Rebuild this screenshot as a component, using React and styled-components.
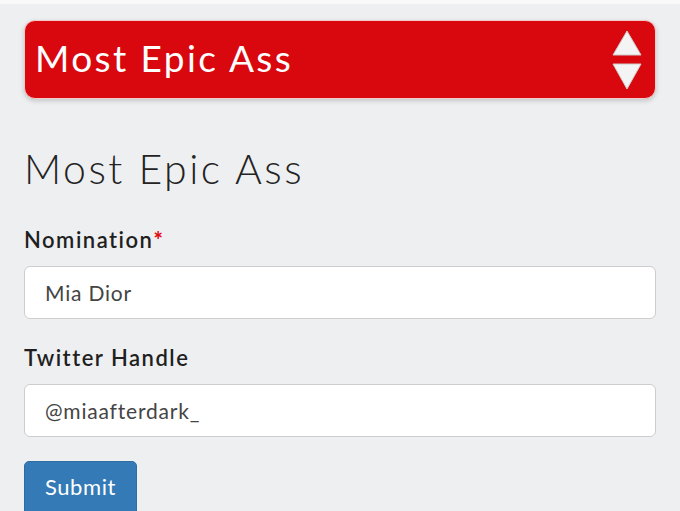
import React from 'react'
import styled, { createGlobalStyle } from 'styled-components'

const Global = createGlobalStyle`
    body {
        margin: 0;
        background: #eeeff1;
        font-family: Lato, "Noto Sans", sans-serif;
    }
`

function App() {
    return (
        <Page>
            <Global />
            <TopStrip />
            <Content>
                <Select>
                    <span>Most Epic Ass</span>
                    <Arrows viewBox="0 0 32 62" width="32" height="62">
                        <path d="M16 2 L30 26 L2 26 Z" fill="#f4f4f4" stroke="#ccc" strokeWidth="1" strokeLinejoin="round" />
                        <path d="M2 35 L30 35 L16 60 Z" fill="#f4f4f4" stroke="#ccc" strokeWidth="1" strokeLinejoin="round" />
                    </Arrows>
                </Select>
                <Title>Most Epic Ass</Title>
                <Field>
                    <Label>Nomination<Req>*</Req></Label>
                    <Input defaultValue="Mia Dior" />
                </Field>
                <Field>
                    <Label>Twitter Handle</Label>
                    <Input defaultValue="@miaafterdark_" />
                </Field>
                <Button>Submit</Button>
            </Content>
        </Page>
    )
}

export default App

const Page = styled.div`
    width: 680px;
    height: 511px;
    overflow: hidden;
`

const TopStrip = styled.div`
    height: 4px;
    background: #f9f9fa;
`

const Content = styled.div`
    padding: 16px 24px 0 24px;
    display: flex;
    flex-direction: column;
`

const Select = styled.div`
    height: 79px;
    box-sizing: border-box;
    background: #d9070e;
    border: 1px solid #f3c9c9;
    border-radius: 11px;
    box-shadow: 0 2px 5px rgba(0,0,0,0.18);
    display: flex;
    align-items: center;
    justify-content: space-between;
    padding: 0 12px 0 10px;
    span{
        color: #fff;
        font-size: 37px;
        letter-spacing: 2.4px;
        padding-bottom: 4px;
    }
`

const Arrows = styled.svg`
    display: block;
`

const Title = styled.h1`
    margin: 45px 0 0 0;
    font-size: 41px;
    font-weight: 300;
    color: #232323;
    line-height: 50px;
    letter-spacing: 2.5px;
`

const Field = styled.div`
    display: flex;
    flex-direction: column;
    margin-top: 34px;
    & + & {
        margin-top: 27px;
    }
`

const Label = styled.label`
    font-size: 22px;
    font-weight: 600;
    color: #1f1f1f;
    letter-spacing: 1.5px;
    line-height: 24px;
    margin-bottom: 14px;
`

const Req = styled.span`
    color: #e00a12;
    font-weight: 900;
`

const Input = styled.input`
    height: 53px;
    box-sizing: border-box;
    border: 1px solid #cdcdcd;
    border-radius: 6px;
    background: #fff;
    padding: 0 20px;
    font-family: Lato, "Noto Sans", sans-serif;
    font-size: 21px;
    letter-spacing: 0.8px;
    color: #444;
    outline: none;
`

const Button = styled.button`
    align-self: flex-start;
    margin-top: 24px;
    width: 113px;
    height: 56px;
    background: #337ab7;
    border: 1px solid #2e6da4;
    border-radius: 5px;
    color: #fff;
    font-family: Lato, "Noto Sans", sans-serif;
    font-size: 22px;
    letter-spacing: 0.6px;
    padding-bottom: 6px;
`
